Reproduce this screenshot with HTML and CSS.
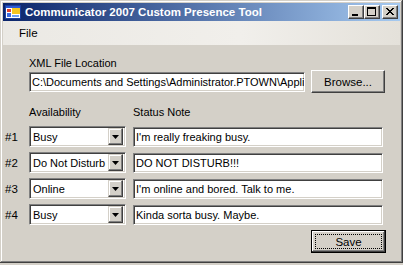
FILE: index.html
```html
<!DOCTYPE html>
<html>
<head>
<meta charset="utf-8">
<link rel="stylesheet" href="styles.css">
</head>
<body>
<div class="window">
  <div class="titlebar">
    <svg class="appicon" width="16" height="16" viewBox="0 0 16 16">
      <rect x="0.5" y="1.5" width="15" height="13" fill="#fff" stroke="#1c3f9c"/>
      <rect x="1" y="2" width="14" height="2" fill="#2b5ad6"/>
      <rect x="2" y="5" width="4" height="3" fill="#e0402a"/>
      <rect x="2" y="9" width="4" height="4" fill="#3c6be0"/>
      <rect x="7" y="4" width="8" height="6" fill="#f5c620"/>
      <rect x="7" y="11" width="7" height="2" fill="#6fa0f0"/>
    </svg>
    <span class="title">Communicator 2007 Custom Presence Tool</span>
    <div class="capbtns">
      <div class="capbtn"><svg width="14" height="12" viewBox="0 0 14 12"><rect x="3" y="8" width="6" height="2" fill="#000"/></svg></div>
      <div class="capbtn"><svg width="14" height="12" viewBox="0 0 14 12"><rect x="2.5" y="1.5" width="8" height="8" fill="none" stroke="#000"/><rect x="2" y="1" width="9" height="2" fill="#000"/></svg></div>
      <div class="capbtn close"><svg width="14" height="12" viewBox="0 0 14 12"><path d="M3 2 L10 9 M4 2 L11 9 M10 2 L3 9 M11 2 L4 9" stroke="#000" stroke-width="1"/></svg></div>
    </div>
  </div>
  <div class="menubar"><span class="menuitem">File</span></div>
  <div class="content">
    <div class="row labelrow"><span class="num"></span><span class="label">XML File Location</span></div>
    <div class="row pathrow">
      <span class="num"></span>
      <div class="textbox path">C:\Documents and Settings\Administrator.PTOWN\Appli</div>
      <div class="button browse">Browse...</div>
    </div>
    <div class="row headrow">
      <span class="num"></span>
      <span class="label availlabel">Availability</span>
      <span class="label">Status Note</span>
    </div>
    <div class="row entry">
      <span class="num">#1</span>
      <div class="combo"><span class="cval">Busy</span><span class="dropbtn"><svg width="7" height="4" viewBox="0 0 7 4"><path d="M0 0 H7 L3.5 4 Z" fill="#000"/></svg></span></div>
      <div class="textbox note">I'm really freaking busy.</div>
    </div>
    <div class="row entry">
      <span class="num">#2</span>
      <div class="combo"><span class="cval">Do Not Disturb</span><span class="dropbtn"><svg width="7" height="4" viewBox="0 0 7 4"><path d="M0 0 H7 L3.5 4 Z" fill="#000"/></svg></span></div>
      <div class="textbox note">DO NOT DISTURB!!!</div>
    </div>
    <div class="row entry">
      <span class="num">#3</span>
      <div class="combo"><span class="cval">Online</span><span class="dropbtn"><svg width="7" height="4" viewBox="0 0 7 4"><path d="M0 0 H7 L3.5 4 Z" fill="#000"/></svg></span></div>
      <div class="textbox note">I'm online and bored. Talk to me.</div>
    </div>
    <div class="row entry">
      <span class="num">#4</span>
      <div class="combo"><span class="cval">Busy</span><span class="dropbtn"><svg width="7" height="4" viewBox="0 0 7 4"><path d="M0 0 H7 L3.5 4 Z" fill="#000"/></svg></span></div>
      <div class="textbox note">Kinda sorta busy. Maybe.</div>
    </div>
    <div class="row saverow">
      <div class="button save"><span class="focus">Save</span></div>
    </div>
  </div>
</div>
</body>
</html>
```
FILE: styles.css
```css
* { box-sizing: border-box; }
html, body { margin: 0; padding: 0; background: #d4d0c8; }
body { width: 403px; height: 265px; overflow: hidden; font-family: "Liberation Sans", Arial, sans-serif; font-size: 11px; color: #000; }
.window {
  width: 403px; height: 263px; padding: 3px;
  background: #d4d0c8;
  box-shadow: inset -1px -1px #404040, inset 1px 1px #d4d0c8, inset -2px -2px #808080, inset 2px 2px #fff;
  display: flex; flex-direction: column;
}
.titlebar {
  height: 18px; display: flex; align-items: center;
  background: linear-gradient(to right, #0a246a, #a6caf0);
  padding-left: 2px;
}
.appicon { flex: none; }
.title { color: #fff; font-weight: bold; font-size: 11.5px; margin-left: 4px; white-space: nowrap; flex: 1; }
.capbtns { display: flex; margin-right: 2px; }
.capbtn {
  width: 16px; height: 14px; background: #d4d0c8;
  border: 1px solid; border-color: #fff #404040 #404040 #fff;
  box-shadow: inset -1px -1px #808080;
  display: flex; align-items: center; justify-content: center;
}
.capbtn.close { margin-left: 2px; }
.menubar {
  height: 24px; display: flex; align-items: center;
  background: linear-gradient(to right, #ebe9e4, #f1efeb 60%, #e4e1da);
  padding-left: 16px;
}
.menuitem { font-size: 11.5px; }
.content { padding: 12px 0 0 2px; display: flex; flex-direction: column; }
.row { display: flex; align-items: center; }
.num { width: 24px; flex: none; font-size: 11.5px; }
.label { line-height: 13px; white-space: nowrap; }
.labelrow { height: 13px; }
.pathrow { height: 23px; }
.textbox {
  height: 20px; background: #fff;
  border: 1px solid; border-color: #808080 #fff #fff #808080;
  box-shadow: inset 1px 1px #404040, inset -1px -1px #d4d0c8;
  padding: 0 2px; line-height: 18px; white-space: nowrap; overflow: hidden;
  font-size: 11px;
}
.path { width: 276px; }
.button {
  background: #d4d0c8; height: 23px;
  border: 1px solid; border-color: #fff #404040 #404040 #fff;
  box-shadow: inset -1px -1px #808080, inset 1px 1px #d4d0c8;
  display: flex; align-items: center; justify-content: center; font-size: 11.5px;
}
.browse { width: 74px; margin-left: 6px; }
.headrow { height: 13px; margin-top: 13px; }
.availlabel { width: 104px; }
.entry { height: 21px; margin-top: 5px; }
.headrow + .entry { margin-top: 7px; }
.combo {
  width: 97px; height: 21px; background: #fff;
  border: 1px solid; border-color: #808080 #fff #fff #808080;
  box-shadow: inset 1px 1px #404040, inset -1px -1px #d4d0c8;
  padding: 2px; display: flex; align-items: center;
  font-size: 11px;
}
.cval { flex: 1; padding-left: 1px; white-space: nowrap; overflow: hidden; }
.dropbtn {
  width: 15px; height: 17px; flex: none; background: #d4d0c8;
  border: 1px solid; border-color: #d4d0c8 #404040 #404040 #d4d0c8;
  box-shadow: inset -1px -1px #808080, inset 1px 1px #fff;
  display: flex; align-items: center; justify-content: center;
}
.note { width: 250px; margin-left: 7px; }
.saverow { justify-content: flex-end; margin-top: 5px; padding-right: 14px; }
.save {
  width: 75px; height: 23px;
  border: 1px solid #000;
  box-shadow: inset -1px -1px #404040, inset 1px 1px #fff, inset -2px -2px #808080;
  padding: 3px;
}
.focus { flex: 1; height: 100%; border: 1px dotted #000; display: flex; align-items: center; justify-content: center; }
```
